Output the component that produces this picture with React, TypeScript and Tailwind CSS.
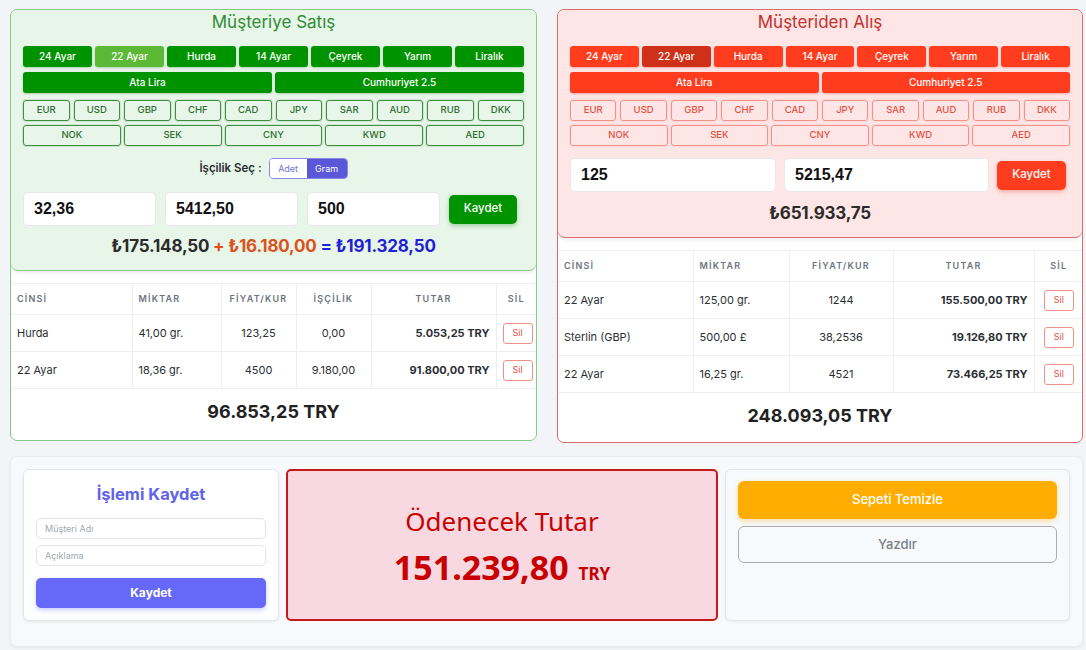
import React from "react";

const golds = ["24 Ayar", "22 Ayar", "Hurda", "14 Ayar", "Çeyrek", "Yarım", "Liralık"];
const cur1 = ["EUR", "USD", "GBP", "CHF", "CAD", "JPY", "SAR", "AUD", "RUB", "DKK"];
const cur2 = ["NOK", "SEK", "CNY", "KWD", "AED"];

type Theme = {
  card: string;
  top: string;
  title: string;
  btn: string;
  btnActive: string;
  outline: string;
  kaydet: string;
};

const green: Theme = {
  card: "border-[#86c989]",
  top: "bg-[#e8f5e9] border-[#86c989]",
  title: "text-[#2f8c34]",
  btn: "bg-[#009300] shadow-[0_1px_2px_rgba(0,120,0,0.25)]",
  btnActive: "bg-[#5cb936] shadow-[0_1px_2px_rgba(0,120,0,0.25)]",
  outline: "border-[#3f8f42] text-[#2e6e31] shadow-[0_0_0_1px_rgba(63,143,66,0.15)]",
  kaydet: "bg-[#009300] shadow-[0_2px_4px_rgba(0,120,0,0.3)]",
};

const red: Theme = {
  card: "border-[#dc6b6d]",
  top: "bg-[#ffe6e6] border-[#dc6b6d]",
  title: "text-[#c4302b]",
  btn: "bg-[#ff3c1e] shadow-[0_1px_2px_rgba(200,40,20,0.3)]",
  btnActive: "bg-[#cf3118] shadow-[0_1px_2px_rgba(200,40,20,0.3)]",
  outline: "border-[#f19389] text-[#e6503f] shadow-[0_0_0_1px_rgba(241,147,137,0.15)]",
  kaydet: "bg-[#ff3c1e] shadow-[0_2px_4px_rgba(200,40,20,0.3)]",
};

function ButtonGrid({ t }: { t: Theme }) {
  return (
    <>
      <div className="mt-[11px] flex gap-[3px]">
        {golds.map((g) => (
          <div
            key={g}
            className={`flex h-[21px] flex-1 items-center justify-center rounded-[3px] text-[10px] font-medium text-white ${
              g === "22 Ayar" ? t.btnActive : t.btn
            }`}
          >
            {g}
          </div>
        ))}
      </div>
      <div className="mt-[5px] flex gap-[3px]">
        {["Ata Lira", "Cumhuriyet 2.5"].map((g) => (
          <div
            key={g}
            className={`flex h-[21px] flex-1 items-center justify-center rounded-[3px] text-[10px] font-medium text-white ${t.btn}`}
          >
            {g}
          </div>
        ))}
      </div>
      <div className="mt-[7px] flex gap-[4px]">
        {cur1.map((c) => (
          <div
            key={c}
            className={`flex h-[21px] flex-1 items-center justify-center rounded-[3px] border text-[9.5px] font-medium ${t.outline}`}
          >
            {c}
          </div>
        ))}
      </div>
      <div className="mt-[4px] flex gap-[3px]">
        {cur2.map((c) => (
          <div
            key={c}
            className={`flex h-[21px] flex-1 items-center justify-center rounded-[3px] border text-[9.5px] font-medium ${t.outline}`}
          >
            {c}
          </div>
        ))}
      </div>
    </>
  );
}

function NumInput({ value, w }: { value: string; w: string }) {
  return (
    <div
      className={`flex h-[34px] ${w} items-center rounded-[5px] border border-[#e6e8eb] bg-white pl-[10px] text-[16px] font-bold text-[#111] [font-family:'Liberation_Sans',Arial,sans-serif]`}
    >
      {value}
    </div>
  );
}

function SilBtn() {
  return (
    <div className="mx-auto flex h-[21px] w-[30px] items-center justify-center rounded-[3px] border border-[#f09189] text-[9px] text-[#e6503f]">
      Sil
    </div>
  );
}

const th = "h-[31px] border-b border-r border-[#eceef1] px-[6px] text-[9px] font-semibold tracking-[1.2px] text-[#6c7480]";
const td = "h-[37px] border-b border-r border-[#eceef1] px-[6px] text-[11px] text-[#2b2f33]";

function LeftPanel() {
  const t = green;
  const rows = [
    ["Hurda", "41,00 gr.", "123,25", "0,00", "5.053,25 TRY"],
    ["22 Ayar", "18,36 gr.", "4500", "9.180,00", "91.800,00 TRY"],
  ];
  return (
    <div className={`w-[527px] overflow-hidden rounded-[7px] border bg-white ${t.card}`}>
      <div className={`rounded-[7px] border-b px-[12px] pb-[13px] shadow-[0_2px_4px_rgba(0,0,0,0.08)] ${t.top}`}>
        <div className={`h-[25px] text-center text-[17px] leading-[25px] ${t.title}`}>Müşteriye Satış</div>
        <ButtonGrid t={t} />
        <div className="mt-[12px] flex h-[21px] items-center justify-center">
          <span className="mr-[7px] text-[11.5px] font-semibold text-[#2b2f33]">İşçilik Seç :</span>
          <div className="flex h-[21px] overflow-hidden rounded-[4px] border border-[#8a8ae6]">
            <div className="flex w-[37px] items-center justify-center bg-white text-[9px] text-[#7373d8]">Adet</div>
            <div className="flex w-[40px] items-center justify-center bg-[#5a57d8] text-[9px] text-white">Gram</div>
          </div>
        </div>
        <div className="mt-[13px] flex items-center gap-[9px]">
          <NumInput value="32,36" w="w-[133px]" />
          <NumInput value="5412,50" w="w-[133px]" />
          <NumInput value="500" w="w-[133px]" />
          <div className={`flex h-[29px] w-[68px] items-center justify-center rounded-[5px] text-[11.5px] font-medium text-white ${t.kaydet}`}>
            Kaydet
          </div>
        </div>
        <div className="mt-[9px] h-[22px] text-center text-[17px] font-bold leading-[22px] tracking-[-0.2px]">
          <span className="text-[#2b2b2b]">₺175.148,50</span>
          <span className="text-[#d9531a]"> + ₺16.180,00</span>
          <span className="text-[#1f1fd6]"> = ₺191.328,50</span>
        </div>
      </div>
      <table className="mt-[12px] w-full table-fixed border-collapse border-t border-[#eceef1]">
        <colgroup>
          <col className="w-[121px]" />
          <col className="w-[89px]" />
          <col className="w-[75px]" />
          <col className="w-[75px]" />
          <col className="w-[125px]" />
          <col className="w-[40px]" />
        </colgroup>
        <thead>
          <tr>
            <th className={`${th} text-left`}>CİNSİ</th>
            <th className={`${th} text-left`}>MİKTAR</th>
            <th className={`${th} text-center`}>FİYAT/KUR</th>
            <th className={`${th} text-center`}>İŞÇİLİK</th>
            <th className={`${th} text-center`}>TUTAR</th>
            <th className={`${th} border-r-0 text-center`}>SİL</th>
          </tr>
        </thead>
        <tbody>
          {rows.map((r, i) => (
            <tr key={i}>
              <td className={`${td} text-left`}>{r[0]}</td>
              <td className={`${td} text-left`}>{r[1]}</td>
              <td className={`${td} text-center`}>{r[2]}</td>
              <td className={`${td} text-center`}>{r[3]}</td>
              <td className={`${td} text-right font-bold text-[#1f2226]`}>{r[4]}</td>
              <td className={`${td} border-r-0 px-0`}>
                <SilBtn />
              </td>
            </tr>
          ))}
        </tbody>
      </table>
      <div className="flex h-[44px] items-center justify-center text-[18px] font-bold text-[#222]">96.853,25 TRY</div>
      <div className="h-[7px]" />
    </div>
  );
}

function RightPanel() {
  const t = red;
  const rows = [
    ["22 Ayar", "125,00 gr.", "1244", "155.500,00 TRY"],
    ["Sterlin (GBP)", "500,00 £", "38,2536", "19.126,80 TRY"],
    ["22 Ayar", "16,25 gr.", "4521", "73.466,25 TRY"],
  ];
  return (
    <div className={`w-[526px] overflow-hidden rounded-[7px] border bg-white ${t.card}`}>
      <div className={`rounded-[7px] border-b px-[12px] pb-[13px] shadow-[0_2px_4px_rgba(0,0,0,0.08)] ${t.top}`}>
        <div className={`h-[25px] text-center text-[17px] leading-[25px] ${t.title}`}>Müşteriden Alış</div>
        <ButtonGrid t={t} />
        <div className="mt-[12px] flex items-center gap-[8px]">
          <NumInput value="125" w="w-[206px]" />
          <NumInput value="5215,47" w="w-[205px]" />
          <div className={`flex h-[29px] w-[69px] items-center justify-center rounded-[5px] text-[11.5px] font-medium text-white ${t.kaydet}`}>
            Kaydet
          </div>
        </div>
        <div className="mt-[10px] h-[22px] text-center text-[17px] font-bold leading-[22px] tracking-[-0.2px] text-[#2b2b2b]">₺651.933,75</div>
      </div>
      <table className="mt-[12px] w-full table-fixed border-collapse border-t border-[#eceef1]">
        <colgroup>
          <col className="w-[135px]" />
          <col className="w-[96px]" />
          <col className="w-[104px]" />
          <col className="w-[141px]" />
          <col className="w-[49px]" />
        </colgroup>
        <thead>
          <tr>
            <th className={`${th} text-left`}>CİNSİ</th>
            <th className={`${th} text-left`}>MİKTAR</th>
            <th className={`${th} text-center`}>FİYAT/KUR</th>
            <th className={`${th} text-center`}>TUTAR</th>
            <th className={`${th} border-r-0 text-center`}>SİL</th>
          </tr>
        </thead>
        <tbody>
          {rows.map((r, i) => (
            <tr key={i}>
              <td className={`${td} text-left`}>{r[0]}</td>
              <td className={`${td} text-left`}>{r[1]}</td>
              <td className={`${td} text-center`}>{r[2]}</td>
              <td className={`${td} text-right font-bold text-[#1f2226]`}>{r[3]}</td>
              <td className={`${td} border-r-0 px-0`}>
                <SilBtn />
              </td>
            </tr>
          ))}
        </tbody>
      </table>
      <div className="flex h-[44px] items-center justify-center text-[18px] font-bold text-[#222]">248.093,05 TRY</div>
      <div className="h-[5px]" />
    </div>
  );
}

export default function App() {
  return (
    <div className="min-h-[650px] bg-[#f3f4f7] pl-[10px] pr-[3px] pt-[9px] [font-family:Inter,'Noto_Sans',sans-serif]">
      <div className="flex items-start gap-[20px]">
        <LeftPanel />
        <RightPanel />
      </div>
      <div className="mt-[13px] flex h-[191px] gap-[7px] rounded-[7px] border border-[#eaecf0] bg-[#f8f9fb] px-[12px] pt-[12px] shadow-[0_1px_3px_rgba(0,0,0,0.06)]">
        <div className="flex h-[152px] w-[256px] flex-col rounded-[6px] border border-[#e3e5e9] bg-white px-[12px] shadow-[0_1px_3px_rgba(0,0,0,0.07)]">
          <div className="mt-[13px] h-[22px] text-center text-[16.5px] font-bold leading-[22px] text-[#5f63e8]">İşlemi Kaydet</div>
          <div className="mt-[13px] flex h-[21px] items-center rounded-[5px] border border-[#e1e4e8] pl-[8px] text-[9px] text-[#a3a8b0]">
            Müşteri Adı
          </div>
          <div className="mt-[6px] flex h-[21px] items-center rounded-[5px] border border-[#e1e4e8] pl-[8px] text-[9px] text-[#a3a8b0]">
            Açıklama
          </div>
          <div className="mt-[12px] flex h-[30px] items-center justify-center rounded-[5px] bg-[#6668f7] text-[12px] font-bold text-white shadow-[0_2px_5px_rgba(102,104,247,0.35)]">
            Kaydet
          </div>
        </div>
        <div className="flex h-[152px] w-[432px] flex-col items-center justify-center rounded-[5px] border-2 border-[#c51a1a] bg-[#f9d9e1] pt-[8px] text-[#c80000] [font-family:'Noto_Sans',sans-serif]">
          <div className="text-[26px] leading-[36px]">Ödenecek Tutar</div>
          <div className="mt-[6px] flex items-baseline leading-[44px]">
            <span className="text-[34px] font-bold">151.239,80</span>
            <span className="ml-[10px] text-[17px] font-bold">TRY</span>
          </div>
        </div>
        <div className="flex h-[152px] flex-1 flex-col rounded-[6px] border border-[#e3e5e9] bg-[#f8f9fa] px-[12px] pt-[11px] shadow-[0_1px_3px_rgba(0,0,0,0.07)]">
          <div className="flex h-[38px] items-center justify-center rounded-[6px] bg-[#ffad00] text-[13px] font-medium text-white shadow-[0_2px_5px_rgba(255,173,0,0.35)]">
            Sepeti Temizle
          </div>
          <div className="mt-[7px] flex h-[37px] items-center justify-center rounded-[6px] border border-[#a9aeb4] text-[13px] font-medium text-[#7a8088]">
            Yazdır
          </div>
        </div>
      </div>
    </div>
  );
}
